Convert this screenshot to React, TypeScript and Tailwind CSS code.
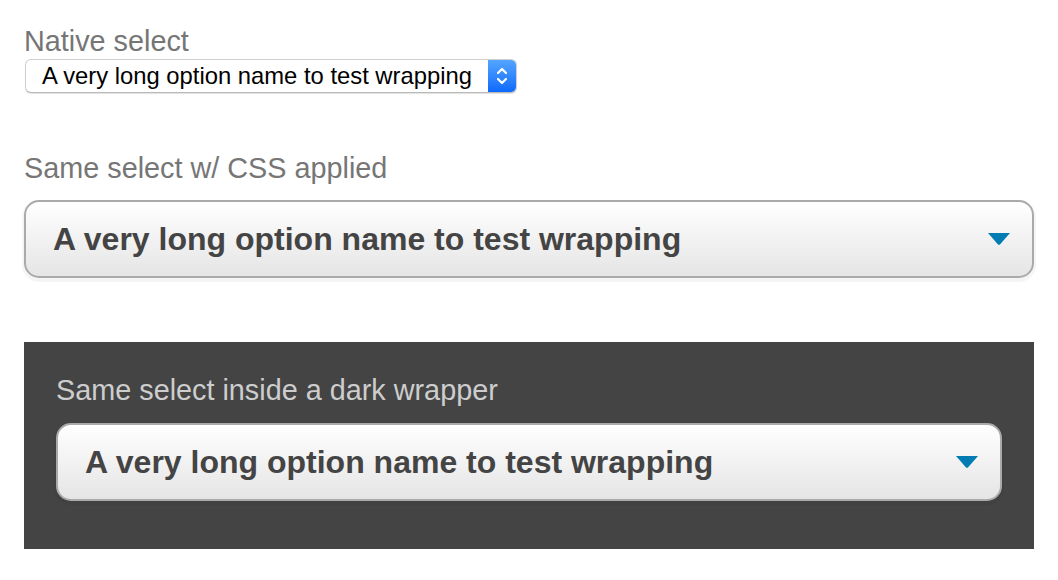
import React from 'react';

const OPTION = 'A very long option name to test wrapping';

const Arrow: React.FC = () => (
  <svg width="22" height="12" viewBox="0 0 22 12" className="shrink-0">
    <path d="M0 0 H22 L12.2 11.2 Q11 12.4 9.8 11.2 Z" fill="#007cb2" />
  </svg>
);

const StyledSelect: React.FC<{ width: string }> = ({ width }) => (
  <div
    className={`${width} h-[78px] rounded-[15px] border-2 border-[#aaa] bg-gradient-to-b from-white to-[#e5e5e5] shadow-[0_2px_0_2px_rgba(0,0,0,0.04)] flex items-center pl-[27px] pr-[22px]`}
  >
    <span className="flex-1 text-[32px] font-bold text-[#444] leading-none pb-[1px] whitespace-nowrap">
      {OPTION}
    </span>
    <Arrow />
  </div>
);

const NativeSelect: React.FC = () => (
  <div className="ml-px mt-px w-[492px] h-[34px] rounded-[6px] border border-[#cfcfcf] border-b-[#b9b9b9] bg-white shadow-[0_1px_1px_rgba(0,0,0,0.12)] flex items-stretch overflow-hidden">
    <span className="flex-1 flex items-center pl-[16px] text-[23.8px] text-black leading-none whitespace-nowrap">
      {OPTION}
    </span>
    <div className="w-[28px] bg-gradient-to-b from-[#53a5ff] to-[#0c69fb] flex items-center justify-center">
      <svg width="14" height="22" viewBox="0 0 14 22" fill="none" stroke="white" strokeWidth="2.2" strokeLinecap="round" strokeLinejoin="round">
        <path d="M3 8 L7 4 L11 8" />
        <path d="M3 14 L7 18 L11 14" />
      </svg>
    </div>
  </div>
);

export default function App() {
  return (
    <div className="w-[1058px] h-[580px] bg-white px-6 pt-6 font-['Liberation_Sans',Arial,sans-serif]">
      <div className="text-[28.8px] leading-[34px] text-[#767676]">Native select</div>
      <NativeSelect />

      <div className="mt-[58px] text-[28.8px] leading-[34px] text-[#767676]">Same select w/ CSS applied</div>
      <div className="mt-[15px]">
        <StyledSelect width="w-[1010px]" />
      </div>

      <div className="mt-[64px] bg-[#444] pt-[31px] pb-[48px] px-8">
        <div className="text-[28.8px] leading-[34px] text-[#cdcdcd]">Same select inside a dark wrapper</div>
        <div className="mt-[16px]">
          <StyledSelect width="w-[946px]" />
        </div>
      </div>
    </div>
  );
}
